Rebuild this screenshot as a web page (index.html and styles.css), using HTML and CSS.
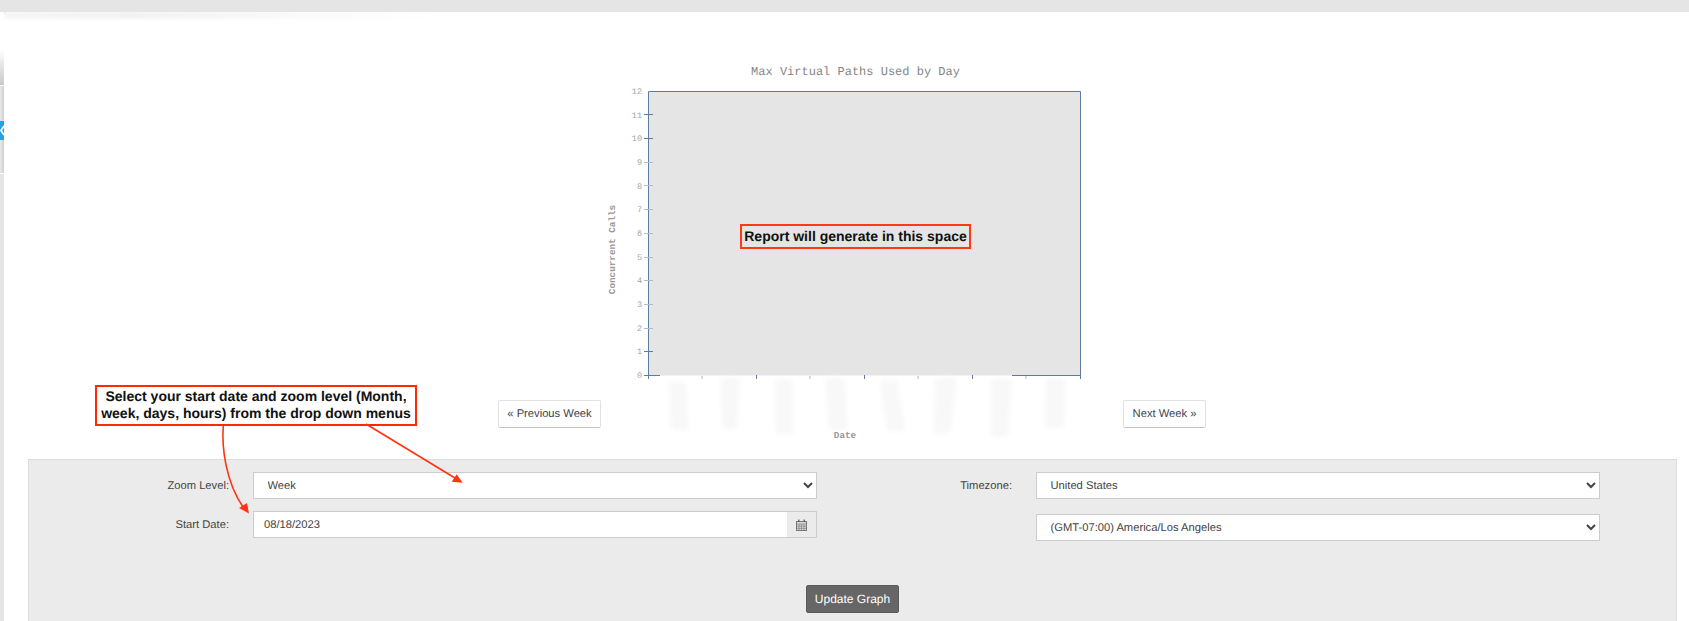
FILE: index.html
```html
<!DOCTYPE html>
<html lang="en">
<head>
<meta charset="utf-8">
<title>Max Virtual Paths Used by Day</title>
<link rel="stylesheet" href="styles.css">
</head>
<body>
<div class="app">
  <aside class="side">
    <div class="side-blank"></div>
    <div class="side-fade"></div>
    <div class="side-rule"></div>
    <div class="side-a"></div>
    <div class="side-tab">
      <svg width="4" height="19" viewBox="0 0 4 19"><polyline points="4,5 1,9.5 4,14" fill="none" stroke="#fff" stroke-width="1.8"/></svg>
    </div>
    <div class="side-b"></div>
    <div class="side-rule"></div>
    <div class="side-c"></div>
  </aside>
  <main class="main">
    <div class="top-smear"></div>
    <section class="chart-row">
      <button class="nav-btn prev" type="button">« Previous Week</button>
      <div class="chart">
        <svg class="chart-svg" width="522" height="385" viewBox="601 60 522 385">
          <defs>
            <filter id="soft" x="-50%" y="-50%" width="200%" height="200%"><feGaussianBlur stdDeviation="2.8"/></filter>
          </defs>
          <text class="title" x="855.5" y="75" text-anchor="middle">Max Virtual Paths Used by Day</text>
          <rect class="plot" x="648.5" y="91.5" width="432" height="284"/>
          <g class="smears" filter="url(#soft)">
            <path d="M669 382H686L688 430H671Z"/>
            <path d="M721 378H740L737 429H722Z"/>
            <path d="M775 379H792L793 434H776Z"/>
            <path d="M825 378H845L847 430H829Z"/>
            <path d="M880 381H897L905 431H887Z"/>
            <path d="M935 378H957L950 434H934Z"/>
            <path d="M991 379H1012L1008 437H991Z"/>
            <path d="M1046 378H1065L1064 428H1045Z"/>
          </g>
          <g class="axis">
            <path d="M648.5 91.5H1080.5V379M648.5 91.5V379"/>
            <path d="M648.5 375.5H660M1012 375.5H1080.5"/>
            <path d="M644 114.5H653M644 138.5H653M644 351.5H653M644 375.5H654"/>
            <path d="M756.5 375V379M864.5 375V379M972.5 375V379"/>
          </g>
          <g class="axis-soft">
            <path d="M644 162.5H653M644 185.5H653M644 209.5H653M644 233.5H653M644 257.5H653M644 280.5H653M644 304.5H653M644 328.5H653"/>
            <path d="M702 376V379M810 376V379M918 376V379M1026 376V379"/>
          </g>
          <g class="ticks" text-anchor="end">
            <text x="642" y="94">12</text>
            <text x="642" y="118">11</text>
            <text x="642" y="141">10</text>
            <text x="642" y="165">9</text>
            <text x="642" y="189">8</text>
            <text x="642" y="212">7</text>
            <text x="642" y="236">6</text>
            <text x="642" y="260">5</text>
            <text x="642" y="283">4</text>
            <text x="642" y="307">3</text>
            <text x="642" y="331">2</text>
            <text x="642" y="354">1</text>
            <text x="642" y="378">0</text>
          </g>
          <text class="axis-label" transform="translate(615 249.5) rotate(-90)" text-anchor="middle">Concurrent Calls</text>
          <text class="axis-label" x="845" y="438" text-anchor="middle">Date</text>
        </svg>
        <div class="report-note">Report will generate in this space</div>
      </div>
      <button class="nav-btn next" type="button">Next Week »</button>
    </section>

    <form class="panel">
      <div class="fields">
        <div class="col col-left">
          <label class="field-label" for="zoom">Zoom Level:</label>
          <select class="control" id="zoom"><option>Week</option></select>
          <label class="field-label" for="start">Start Date:</label>
          <div class="date-group">
            <input class="date-input" id="start" type="text" value="08/18/2023">
            <span class="date-addon">
              <svg width="11" height="12" viewBox="0 0 11 12">
                <rect class="cal-body" x="0.5" y="2.5" width="10" height="9"/>
                <path class="cal-grid" d="M0.5 5H10.5M0.5 7.2H10.5M0.5 9.4H10.5M3 5V11.5M5.5 5V11.5M8 5V11.5"/>
                <path class="cal-ring" d="M2.8 0.5V3M8.2 0.5V3"/>
              </svg>
            </span>
          </div>
        </div>
        <div class="col col-right">
          <label class="field-label" for="country">Timezone:</label>
          <select class="control" id="country"><option>United States</option></select>
          <span></span>
          <select class="control" id="tz" aria-label="Time zone"><option>(GMT-07:00) America/Los Angeles</option></select>
        </div>
      </div>
      <div class="actions">
        <button class="update-btn" type="button">Update Graph</button>
      </div>
    </form>

    <div class="callout">Select your start date and zoom level (Month, week, days, hours) from the drop down menus</div>
    <svg class="arrows" width="300" height="110" viewBox="200 415 300 110">
      <path class="arrow-line" d="M223.3 425.7C221.5 448 226 482 243 507"/>
      <polygon class="arrow-head" points="239,508 247,503 249,513.5"/>
      <path class="arrow-line" d="M366 424L455 478"/>
      <polygon class="arrow-head" points="451.7,481.7 456.7,474.3 462.7,482.7"/>
    </svg>
  </main>
</div>
</body>
</html>
```
FILE: styles.css
```css
* { box-sizing: border-box; }
html, body { margin: 0; height: 621px; overflow: hidden; }
body {
  background: #e5e5e5;
  font-family: "Liberation Sans", Arial, sans-serif;
  font-size: 11.2px;
  color: #444;
  text-rendering: geometricPrecision;
}
button, select, input { text-rendering: inherit; }
.app { display: flex; height: 621px; }

/* Left sliver of the page behind the modal */
.side { width: 4px; flex: none; display: flex; flex-direction: column; }
.side-blank { height: 60px; background: linear-gradient(#e5e5e5 12px, #fff 12px, #fff 48px, #f2f2f2); }
.side-fade { height: 25px; background: linear-gradient(#ededed, #c9c9c9); }
.side-rule { height: 1px; background: #fff; }
.side-a { height: 35px; background: linear-gradient(90deg, #e9e9e9, #cfcfcf); }
.side-tab { height: 19px; background: #25a3de; line-height: 0; }
.side-b { height: 33px; background: linear-gradient(90deg, #e9e9e9, #cfcfcf); }
.side-c { flex: 1; background: #e5e5e5; }

/* White modal surface */
.main {
  position: relative;
  flex: 1;
  margin-top: 12px;
  padding: 48px 12px 0 24px;
  background: #fff;
  border-top-left-radius: 4px;
  overflow: hidden;
}
.top-smear {
  position: absolute;
  top: 0;
  left: 0;
  width: 430px;
  height: 6px;
  background: linear-gradient(90deg, #f3f3f3, #efefef 30%, #fff);
  filter: blur(2px);
}

/* Chart row */
.chart-row { display: flex; align-items: flex-end; height: 385px; padding-left: 470px; }
.chart { position: relative; width: 522px; height: 385px; flex: none; }
.chart-svg { display: block; }
.nav-btn {
  height: 28px;
  margin-bottom: 17px;
  padding: 0;
  flex: none;
  background: #fff;
  border: 1px solid #e2e2e2;
  border-bottom-color: #c4c4c4;
  border-radius: 2px;
  font: 11.2px "Liberation Sans", Arial, sans-serif;
  color: #3b4350;
}
.prev { width: 103px; }
.next { width: 83px; }

.title { font: 12px "Liberation Mono", monospace; fill: #858585; }
.plot { fill: #e5e5e5; }
.smears path { fill: #f8f8f9; }
.axis path { fill: none; stroke: #5d7c9f; stroke-width: 1; }
.axis-soft path { fill: none; stroke: #adbdd0; stroke-width: 1; }
.ticks text { font: 8.5px "Liberation Mono", monospace; fill: #a5a5a5; }
.axis-label { font: 700 9.3px "Liberation Mono", monospace; fill: #999; }

.report-note {
  position: absolute;
  left: 139px;
  top: 164px;
  width: 231px;
  height: 25px;
  border: 2px solid #ff3a12;
  font-size: 14px;
  font-weight: 700;
  line-height: 21px;
  text-align: center;
  color: #111;
  white-space: nowrap;
}

/* Form panel */
.panel {
  margin-top: 14px;
  padding: 12px 0 40px;
  background: #ebebeb;
  border: 1px solid #dcdcdc;
}
.fields { display: flex; gap: 95px; }
.col { display: grid; grid-template-rows: 27px 27px; column-gap: 24px; align-items: center; }
.col-left { grid-template-columns: 200px 564px; row-gap: 12px; }
.col-right { grid-template-columns: 100px 564px; row-gap: 15px; }
.field-label { text-align: right; color: #444; }
.control {
  width: 100%;
  height: 27px;
  padding: 0 9.5px;
  background: #fff;
  border: 1px solid #ccc;
  border-radius: 0;
  font: 11.2px "Liberation Sans", Arial, sans-serif;
  color: #444;
}
.date-group { display: flex; height: 27px; border: 1px solid #ccc; }
.date-input {
  flex: 1;
  min-width: 0;
  padding: 0 10px;
  background: #fff;
  border: 0;
  font: 11.2px "Liberation Sans", Arial, sans-serif;
  color: #444;
}
.date-addon { width: 29px; display: flex; align-items: center; justify-content: center; }
.cal-body { fill: #d8d8d8; stroke: #777; }
.cal-grid { fill: none; stroke: #777; stroke-width: 0.6; }
.cal-ring { fill: none; stroke: #555; stroke-width: 1.2; }
.actions { display: flex; justify-content: center; margin-top: 44px; }
.update-btn {
  width: 93px;
  height: 28px;
  padding: 0;
  background: #666;
  border: 1px solid #5a5a5a;
  border-radius: 2px;
  font: 12px "Liberation Sans", Arial, sans-serif;
  color: #fff;
}

/* Screenshot annotations lying over the page */
.callout {
  position: absolute;
  left: 91px;
  top: 373px;
  width: 322px;
  height: 41px;
  padding: 1px 2px;
  background: #fff;
  border: 2px solid #ff2a00;
  font-size: 14px;
  font-weight: 700;
  line-height: 17px;
  text-align: center;
  color: #111;
}
.arrows { position: absolute; left: 196px; top: 403px; pointer-events: none; }
.arrow-line { fill: none; stroke: #ff3410; stroke-width: 1.6; }
.arrow-head { fill: #ff3410; }
```
